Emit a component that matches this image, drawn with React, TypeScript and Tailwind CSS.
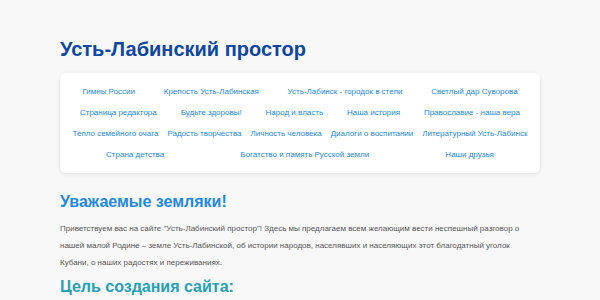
const links = [
  'Гимны России',
  'Крепость Усть-Лабинская',
  'Усть-Лабинск - городок в степи',
  'Светлый дар Суворова',
  'Страница редактора',
  'Будьте здоровы!',
  'Народ и власть',
  'Наша история',
  'Православие - наша вера',
  'Тепло семейного очага',
  'Радость творчества',
  'Личность человека',
  'Диалоги о воспитании',
  'Литературный Усть-Лабинск',
  'Страна детства',
  'Богатство и память Русской земли',
  'Наши друзья',
]

export default function App() {
  return (
    <div className="min-h-[300px] bg-[#f8f8f8] font-['Liberation_Sans',Arial,sans-serif]">
      <div className="mx-auto w-[480px] pt-[36px]">
        <h1 className="text-[20px] font-bold leading-[26px] text-[#0d47a1]">Усть-Лабинский простор</h1>

        <nav className="mt-[11px] flex flex-wrap justify-around rounded-md bg-white px-[8px] py-[8px] shadow-[0_1px_4px_rgba(0,0,0,0.1)]">
          {links.map((l) => (
            <a key={l} href="#" className="px-[4px] py-[4px] text-[8px] leading-[13px] text-[#1e88e5]">
              {l}
            </a>
          ))}
        </nav>

        <h2 className="mt-[18px] text-[16px] font-bold leading-[22px] text-[#1e88e5]">Уважаемые земляки!</h2>
        <p className="mt-[7px] text-[8px] leading-[17px] text-[#555]">
          Приветствуем вас на сайте "Усть-Лабинский простор"! Здесь мы предлагаем всем желающим вести неспешный разговор о
          нашей малой Родине – земле Усть-Лабинской, об истории народов, населявших и населяющих этот благодатный уголок
          Кубани, о наших радостях и переживаниях.
        </p>
        <h3 className="mt-[5px] text-[16px] font-bold leading-[22px] text-[#26a0b4]">Цель создания сайта:</h3>
      </div>
    </div>
  )
}
